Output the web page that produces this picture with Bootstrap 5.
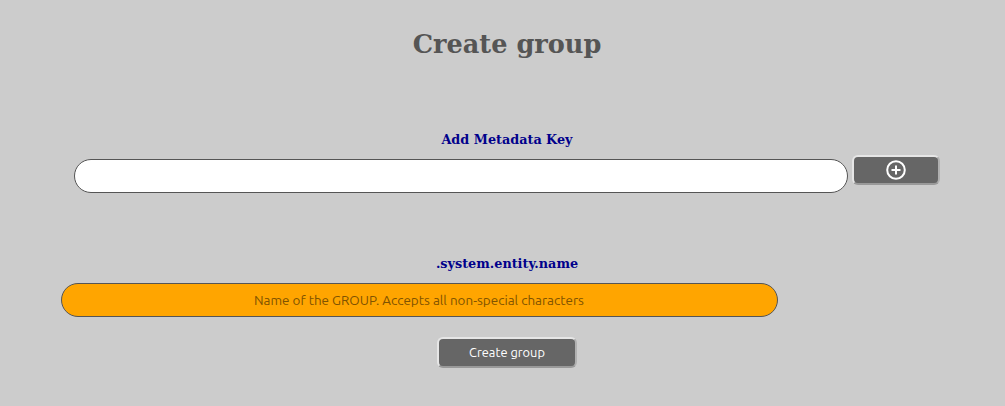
<!DOCTYPE html>
<html lang="en"><head><meta charset="utf-8"><title>Create group</title>
<link href="https://cdn.jsdelivr.net/npm/bootstrap@5.3.0/dist/css/bootstrap.min.css" rel="stylesheet">
<style>
html,body{height:100%}
body{background:#ccc;font-family:Ubuntu,"Noto Sans",sans-serif;overflow:hidden}
.heading{font-family:"DejaVu Serif",serif;font-weight:700;font-size:25.6px;color:#555;line-height:32px;padding-top:28px;margin:0 0 72px;text-align:center;padding-left:9px}
.lbl{font-family:"DejaVu Serif",serif;font-weight:700;font-size:12.8px;color:#00008b;line-height:16px;margin:0;text-align:center;padding-left:9px}
.lbl-name{margin-top:63px}
.key-row{padding-left:74px;gap:4px;margin-top:11px}
.pill{height:34px;border:1px solid #555;border-radius:17px;background:#fff}
.pill-key{width:774px}
.pill-name{width:717px;margin-left:61px;background:#ffa500;color:#7f5300;font-size:13.45px;padding:0 0 0 192px;line-height:32px;margin-top:11px}
.gbtn{background:#666;color:#fff;border:2px solid;border-color:#e6e6e6 #b0b0b0 #999 #e6e6e6;border-radius:6px;font-size:12.8px;padding:0}
.gbtn:hover{background:#666;color:#fff;border-color:#e6e6e6 #b0b0b0 #999 #e6e6e6}
.add{width:88px;height:30px;margin-top:-4px}
.go{width:140px;height:31px}
.go-row{margin-top:20px;padding-left:9px}
</style></head><body>
<h1 class="heading">Create group</h1>
<p class="lbl">Add Metadata Key</p>
<div class="d-flex key-row align-items-start">
<div class="pill pill-key"></div>
<button class="btn gbtn add d-flex align-items-center justify-content-center" aria-label="Add"><svg width="20" height="20" viewBox="0 0 20 20" fill="none" stroke="#fff" stroke-width="2"><circle cx="10" cy="10" r="8.8"/><path d="M10 5.5v9M5.5 10h9"/></svg></button>
</div>
<p class="lbl lbl-name">.system.entity.name</p>
<div class="pill pill-name">Name of the GROUP. Accepts all non-special characters</div>
<div class="d-flex justify-content-center go-row"><button class="btn gbtn go">Create group</button></div>
<script src="https://cdn.jsdelivr.net/npm/bootstrap@5.3.0/dist/js/bootstrap.bundle.min.js"></script>
</body></html>
